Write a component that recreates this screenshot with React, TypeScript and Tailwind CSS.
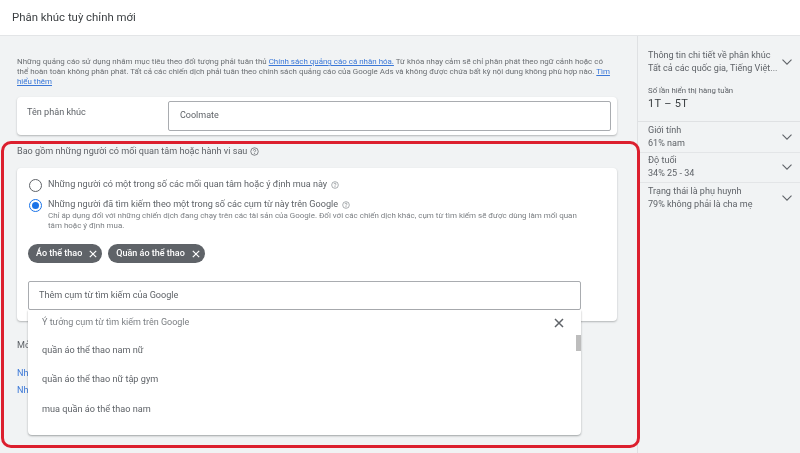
import React from "react";

const font = { fontFamily: "Roboto, sans-serif" };

const HelpIcon = ({ className }: { className: string }) => (
  <svg viewBox="0 0 24 24" className={className} fill="none" stroke="currentColor" strokeWidth="2">
    <circle cx="12" cy="12" r="10" />
    <path d="M9 9.5a3 3 0 0 1 6 0c0 2-3 2.2-3 4.5" />
    <circle cx="12" cy="17.5" r="0.6" fill="currentColor" />
  </svg>
);

const Chevron = () => (
  <svg viewBox="0 0 10 6" className="w-[10px] h-[6px] shrink-0 text-[#5f6368]" fill="none" stroke="currentColor" strokeWidth="1.1">
    <path d="M0.5 0.7l4.5 4.5 4.5-4.5" />
  </svg>
);

const CloseIcon = ({ className }: { className: string }) => (
  <svg viewBox="0 0 10 10" className={className} fill="none" stroke="currentColor" strokeWidth="1.5">
    <path d="M1 1l8 8M9 1l-8 8" />
  </svg>
);

const insights = [
  { title: "Giới tính", value: "61% nam" },
  { title: "Độ tuổi", value: "34% 25 - 34" },
  { title: "Trạng thái là phụ huynh", value: "79% không phải là cha mẹ" },
];

const suggestions = ["quần áo thể thao nam nữ", "quần áo thể thao nữ tập gym", "mua quần áo thể thao nam"];

const Chip = ({ label }: { label: string }) => (
  <div className="flex items-center h-[19px] pl-[8px] pr-[5px] gap-[7px] rounded-full bg-[#5f6368] text-white text-[9px] font-medium">
    <span>{label}</span>
    <CloseIcon className="w-[8px] h-[8px]" />
  </div>
);

export default function App() {
  return (
    <div style={font} className="relative w-full h-screen overflow-hidden flex flex-col bg-[#f1f3f4] text-[#5f6368] blur-[0.45px]">
      <header className="h-[36px] shrink-0 flex items-center px-[12px] bg-white border-b border-[#e3e5e7] text-[11.4px] text-[#3c4043]">
        Phân khúc tuỳ chỉnh mới
      </header>

      <div className="flex flex-1 min-h-0">
        <main className="w-[637px] shrink-0 pl-[17px] pr-[20px] pt-[21px]">
          <p className="text-[7.95px] leading-[10px] text-[#6b6f73] whitespace-nowrap">
            Những quảng cáo sử dụng nhắm mục tiêu theo đối tượng phải tuân thủ{" "}
            <span className="text-[#3b78d8] underline">Chính sách quảng cáo cá nhân hóa.</span> Từ khóa nhạy cảm sẽ chỉ phân phát theo ngữ cảnh hoặc có
            <br />
            thể hoàn toàn không phân phát. Tất cả các chiến dịch phải tuân theo chính sách quảng cáo của Google Ads và không được chứa bất kỳ nội dung không phù hợp nào.{" "}
            <span className="text-[#3b78d8] underline">Tìm</span>
            <br />
            <span className="text-[#3b78d8] underline">hiểu thêm</span>
          </p>

          <section className="mt-[10px] h-[38px] flex justify-between pl-[10px] pr-[6px] pt-[4px] bg-white rounded-[4px] shadow-[0_1px_2px_rgba(60,64,67,0.35)]">
            <span className="text-[9.1px] leading-[22px] text-[#5f6368]">Tên phân khúc</span>
            <div className="w-[443px] h-[30px] flex items-center px-[11px] border border-[#a9acb0] rounded-[2px] text-[9px] text-[#5f6368]">
              Coolmate
            </div>
          </section>

          <div className="mt-[10px] flex items-center gap-[3px] text-[9.1px] leading-[12px]">
            Bao gồm những người có mối quan tâm hoặc hành vi sau
            <HelpIcon className="w-[9px] h-[9px]" />
          </div>

          <section className="relative mt-[11px] h-[153px] pt-[10px] pl-[11px] bg-white rounded-[4px] shadow-[0_1px_2px_rgba(60,64,67,0.35)]">
            <div className="flex items-center h-[14px] pl-[1px]">
              <span className="w-[13px] h-[13px] mr-[6px] rounded-full border border-[#5f6368]" />
              <span className="text-[9.1px] mr-[4px] text-[#5f6368]">Những người có một trong số các mối quan tâm hoặc ý định mua này</span>
              <HelpIcon className="w-[8px] h-[8px] text-[#80868b]" />
            </div>
            <div className="mt-[6px] flex items-center h-[14px] pl-[1px]">
              <span className="w-[13px] h-[13px] mr-[6px] rounded-full border border-[#1a73e8] flex items-center justify-center">
                <span className="w-[7px] h-[7px] rounded-full bg-[#1a73e8]" />
              </span>
              <span className="text-[9.1px] mr-[4px] text-[#5f6368]">Những người đã tìm kiếm theo một trong số các cụm từ này trên Google</span>
              <HelpIcon className="w-[8px] h-[8px] text-[#80868b]" />
            </div>
            <p className="ml-[20px] -mt-[1px] text-[7.97px] leading-[10px] text-[#7b7f83] whitespace-nowrap">
              Chỉ áp dụng đối với những chiến dịch đang chạy trên các tài sản của Google. Đối với các chiến dịch khác, cụm từ tìm kiếm sẽ được dùng làm mối quan
              <br />
              tâm hoặc ý định mua.
            </p>

            <div className="mt-[13px] flex gap-[6px]">
              <Chip label="Áo thể thao" />
              <Chip label="Quần áo thể thao" />
            </div>

            <div className="relative mt-[18px] w-[553px] h-[29px] flex items-center px-[10px] border border-[#a9acb0] rounded-[2px] text-[9.1px] text-[#5f6368]">
              Thêm cụm từ tìm kiếm của Google
              <div className="absolute left-[-1px] top-[28px] z-10 w-[553px] h-[125px] pl-[14px] pt-[6px] bg-white rounded-b-[4px] shadow-[0_1px_2px_rgba(60,64,67,0.45)]">
                <div className="flex items-center justify-between pr-[17px] h-[13px] text-[9px] text-[#7b7f83]">
                  Ý tưởng cụm từ tìm kiếm trên Google
                  <CloseIcon className="w-[10px] h-[10px] text-[#5f6368]" />
                </div>
                <div className="mt-[7px]">
                  {suggestions.map((item) => (
                    <div key={item} className="h-[29.5px] flex items-center text-[9.15px] text-[#5f6368]">
                      {item}
                    </div>
                  ))}
                </div>
                <div className="absolute right-0 top-[25px] w-[5px] h-[16px] bg-[#bdbdbd]" />
              </div>
            </div>
          </section>

          <div className="mt-[18px] text-[9.1px] leading-[12px]">Mở</div>
          <div className="mt-[16px] text-[9.1px] leading-[12px] text-[#3b78d8]">Nh</div>
          <div className="mt-[5px] text-[9.1px] leading-[12px] text-[#3b78d8]">Nh</div>
        </main>

        <aside className="flex-1 border-l border-[#dfe1e3] text-[9.05px] leading-[13px]">
          <div className="h-[86px] pt-[13px] pl-[10px] pr-[8px] border-b border-[#dfe1e3]">
            <div className="flex items-center justify-between">
              <div className="whitespace-nowrap">
                Thông tin chi tiết về phân khúc
                <br />
                Tất cả các quốc gia, Tiếng Việt...
              </div>
              <Chevron />
            </div>
            <div className="mt-[11px] text-[7.8px] leading-[10px]">Số lần hiển thị hàng tuần</div>
            <div className="mt-[1px] text-[11px] leading-[14px] tracking-[0.3px] text-[#3c4043]">1T – 5T</div>
          </div>
          {insights.map((row) => (
            <div key={row.title} className="h-[30.5px] flex items-center justify-between pl-[10px] pr-[8px] border-b border-[#e3e5e7] last:border-b-0">
              <div className="whitespace-nowrap">
                {row.title}
                <br />
                {row.value}
              </div>
              <Chevron />
            </div>
          ))}
        </aside>
      </div>

      <div className="absolute left-[1px] top-[141px] w-[639px] h-[307px] rounded-[10px] border-[3px] border-[#dc1f2e] pointer-events-none" />
    </div>
  );
}
